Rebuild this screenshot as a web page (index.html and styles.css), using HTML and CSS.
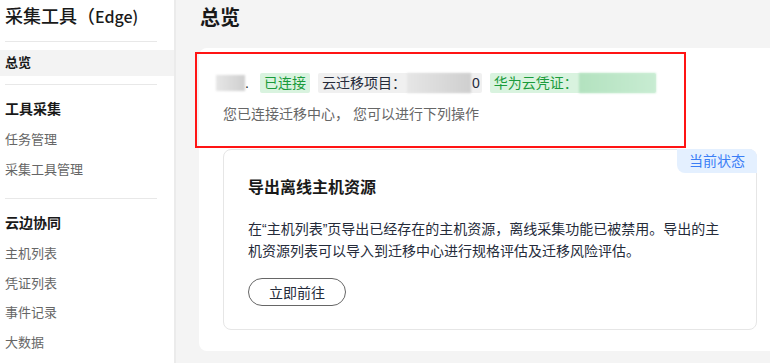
FILE: index.html
```html
<!DOCTYPE html>
<html lang="zh-CN">
<head>
    <meta charset="UTF-8">
    <meta name="viewport" content="width=device-width, initial-scale=1.0">
    <title>采集工具（Edge) - 总览</title>
    <link rel="stylesheet" href="styles.css">
</head>
<body>
    <aside class="sidebar">
        <div class="brand">采集工具<span class="brand-paren">（</span><span class="brand-latin">Edge)</span></div>
        <div class="divider"></div>
        <a class="nav-item active">总览</a>
        <div class="divider"></div>
        <div class="nav-group">工具采集</div>
        <a class="nav-item">任务管理</a>
        <a class="nav-item">采集工具管理</a>
        <div class="divider divider-wide"></div>
        <div class="nav-group">云边协同</div>
        <a class="nav-item">主机列表</a>
        <a class="nav-item">凭证列表</a>
        <a class="nav-item">事件记录</a>
        <a class="nav-item">大数据</a>
    </aside>

    <main class="main">
        <h1 class="page-title">总览</h1>

        <section class="panel">
            <!-- highlight box drawn over the status block -->
            <div class="highlight"></div>

            <div class="status-row">
                <span class="name"><span class="mask mask-gray mask-name"></span>.</span>
                <span class="tag tag-green">已连接</span>
                <span class="tag tag-gray">云迁移项目：<span class="mask mask-gray mask-project"></span>0</span>
                <span class="tag tag-green tag-cred">华为云凭证：<span class="mask mask-green mask-cred"></span></span>
            </div>
            <p class="status-text">您已连接迁移中心， 您可以进行下列操作</p>

            <div class="card">
                <span class="card-badge">当前状态</span>
                <h2 class="card-title">导出离线主机资源</h2>
                <p class="card-desc">在“主机列表”页导出已经存在的主机资源，离线采集功能已被禁用。导出的主机资源列表可以导入到迁移中心进行规格评估及迁移风险评估。</p>
                <button class="btn-outline">立即前往</button>
            </div>
        </section>
    </main>
</body>
</html>
```

FILE: styles.css
```css
* {
    margin: 0;
    padding: 0;
    box-sizing: border-box;
}

body {
    font-family: 'Liberation Sans', 'Noto Sans CJK SC', sans-serif;
    display: flex;
    height: 100vh;
    overflow: hidden;
    color: #252b3a;
    background: #f4f4f4;
}

/* sidebar */
.sidebar {
    width: 176px;
    flex-shrink: 0;
    background: #fff;
    border-right: 2px solid #ebebeb;
}

.brand {
    padding-left: 5px;
    font-size: 18px;
    line-height: 30px;
    color: #191919;
    font-family: 'Noto Sans CJK SC', sans-serif;
    font-weight: 500;
    white-space: nowrap;
}

.brand-latin {
    font-size: 16px;
}

.divider {
    height: 1px;
    background: #e8e8e8;
    margin: 10px 17px 0 5px;
}

.divider + .nav-item {
    margin-top: 8px;
}

.nav-item.active + .divider {
    margin-top: 8px;
}

.divider-wide {
    margin-top: 14px;
}

.nav-group {
    padding-left: 5px;
    margin-top: 8px;
    font-size: 14px;
    font-weight: bold;
    line-height: 32px;
    color: #191919;
}

.nav-group + .nav-item {
    margin-top: 0;
}

.nav-item {
    display: block;
    padding-left: 5px;
    font-size: 13px;
    line-height: 29px;
    color: #666;
    cursor: pointer;
}

.nav-group ~ .nav-item {
    line-height: 29.5px;
}

.nav-item.active {
    background: #f3f3f3;
    color: #191919;
    font-weight: bold;
    line-height: 26px;
}

/* main */
.main {
    flex: 1;
    min-width: 0;
    overflow: hidden;
    padding-left: 23px;
}

.page-title {
    font-size: 20px;
    line-height: 36px;
    padding-left: 1px;
    color: #191919;
}

.panel {
    position: relative;
    width: 582px;
    margin-top: 12px;
    padding: 25px 24px 21px;
    background: #fff;
    border-radius: 8px;
}

.highlight {
    position: absolute;
    left: -4px;
    top: 4px;
    width: 491px;
    height: 96px;
    border: 2px solid #ff1414;
}

.status-row {
    display: flex;
    align-items: center;
    gap: 8px;
    height: 20px;
    font-size: 14px;
}

.name {
    display: flex;
    align-items: center;
    margin-left: -7px;
    margin-right: 3px;
    color: #191919;
}

.mask {
    display: inline-block;
    height: 16px;
    filter: blur(1px);
}

.mask-gray {
    background: linear-gradient(90deg, #e6e6e6, #cfcfcf);
}

.mask-green {
    background: linear-gradient(90deg, #b3e2bf, #c8ecd2);
}

.mask-name {
    width: 29px;
}

.mask-project {
    width: 64px;
    height: 20px;
    margin-left: 1px;
    margin-right: 1px;
}

.mask-cred {
    width: 77px;
    height: 20px;
    margin-left: 1px;
}

.tag {
    display: flex;
    align-items: center;
    height: 20px;
    padding: 0 4px;
    border-radius: 2px;
    line-height: 20px;
    white-space: nowrap;
}

.tag-green {
    background: #d9f3df;
    color: #1a9b3b;
}

.tag-gray {
    background: #f0f0f0;
    color: #252b3a;
    padding-right: 2px;
}

.tag-cred {
    padding-right: 0;
}

.status-text {
    margin-top: 11px;
    font-size: 14px;
    line-height: 20px;
    color: #666;
}

.card {
    position: relative;
    margin-top: 25px;
    padding: 26px 24px 23px;
    border: 1px solid #e6e6e6;
    border-radius: 8px;
}

.card-badge {
    position: absolute;
    top: -1px;
    right: -1px;
    height: 24px;
    padding: 0 12px;
    background: #e4f0ff;
    color: #3b7ef6;
    font-size: 14px;
    line-height: 24px;
    border-radius: 0 8px 0 8px;
}

.card-title {
    font-size: 16px;
    line-height: 24px;
    color: #191919;
}

.card-desc {
    margin-top: 18px;
    font-size: 14px;
    line-height: 22px;
    color: #252b3a;
}

.btn-outline {
    display: block;
    margin-top: 16px;
    width: 98px;
    height: 28px;
    border: 1px solid #666;
    border-radius: 14px;
    background: #fff;
    font-family: inherit;
    font-size: 14px;
    color: #252b3a;
    cursor: pointer;
}
```
